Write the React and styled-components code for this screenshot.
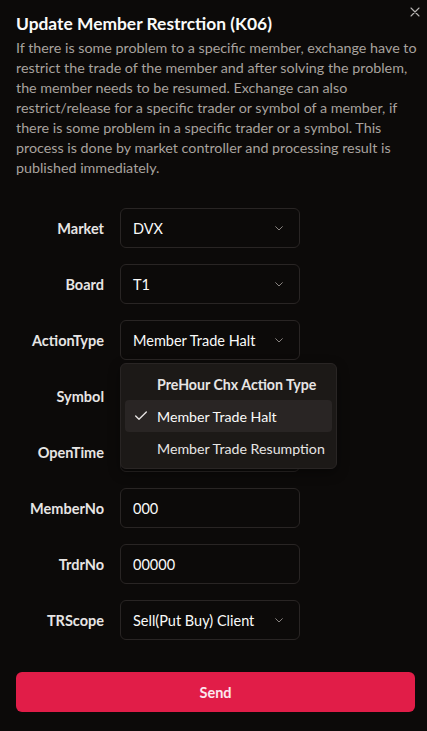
import React from "react";
import styled, { createGlobalStyle } from "styled-components";

const Global = createGlobalStyle`
  html, body { margin: 0; padding: 0; background: #0c0a09; }
  body { font-family: Lato, "Noto Sans", sans-serif; color: #fafaf9; }
  * { box-sizing: border-box; }
`;

const Dialog = styled.div`
  position: relative;
  width: 427px;
  height: 731px;
  background: #0c0a09;
  padding: 13px 4px 0 16px;
  display: flex;
  flex-direction: column;
`;

const Close = styled.button`
  position: absolute;
  top: 4px;
  right: 4px;
  width: 16px;
  height: 16px;
  padding: 0;
  border: 0;
  background: transparent;
  color: #d6d3d1;
  display: flex;
  align-items: center;
  justify-content: center;
  opacity: 0.85;
`;

const Title = styled.h2`
  margin: 0;
  font-size: 17.4px;
  line-height: 22px;
  font-weight: 700;
  color: #fafaf9;
`;

const Desc = styled.p`
  margin: 3px 0 0;
  font-size: 14.3px;
  line-height: 20px;
  color: #a8a29e;
`;

const Form = styled.div`
  position: relative;
  margin-top: 30px;
  display: grid;
  grid-template-columns: 88px 180px;
  column-gap: 16px;
  row-gap: 16px;
  align-items: center;
`;

const Label = styled.label`
  text-align: right;
  font-size: 14.5px;
  font-weight: 700;
  color: #e7e5e4;
`;

const Field = styled.div`
  height: 40px;
  border: 1px solid #292524;
  border-radius: 6px;
  background: #0c0a09;
  display: flex;
  align-items: center;
  justify-content: space-between;
  padding: 0 12px;
  font-size: 14.5px;
  color: #fafaf9;
`;

const Chevron = () => (
  <svg width="16" height="16" viewBox="0 0 24 24" fill="none" stroke="#a8a29e" strokeWidth="1.5" strokeLinecap="round" strokeLinejoin="round" style={{ opacity: 0.8 }}>
    <path d="m7 10 5 5 5-5" />
  </svg>
);

const Menu = styled.div`
  position: absolute;
  left: 104px;
  top: 155px;
  width: 217px;
  padding: 4px;
  background: #1c1917;
  border: 1px solid #292524;
  border-radius: 6px;
  box-shadow: 0 4px 12px rgba(0,0,0,0.4);
`;

const MenuLabel = styled.div`
  height: 32px;
  padding-left: 32px;
  display: flex;
  align-items: center;
  font-size: 14.2px;
  font-weight: 700;
  color: #e7e5e4;
  white-space: nowrap;
`;

const MenuItem = styled.div`
  position: relative;
  height: 32px;
  padding-left: 32px;
  display: flex;
  align-items: center;
  font-size: 14.2px;
  border-radius: 4px;
  white-space: nowrap;
  color: ${p => (p.$active ? "#fafaf9" : "#e7e5e4")};
  background: ${p => (p.$active ? "#292524" : "transparent")};
`;

const Check = styled.span`
  position: absolute;
  left: 8px;
  top: 8px;
  display: flex;
`;

const SendButton = styled.button`
  margin-top: 32px;
  height: 40px;
  width: 399px;
  border: 0;
  border-radius: 6px;
  background: #e11d48;
  color: #fce7ee;
  font-family: inherit;
  font-size: 14.5px;
  font-weight: 700;
`;

const rows = [
  { label: "Market", value: "DVX", select: true },
  { label: "Board", value: "T1", select: true },
  { label: "ActionType", value: "Member Trade Halt", select: true },
  { label: "Symbol", value: "", select: true },
  { label: "OpenTime", value: "", select: true },
  { label: "MemberNo", value: "000" },
  { label: "TrdrNo", value: "00000" },
  { label: "TRScope", value: "Sell(Put Buy) Client", select: true },
];

export default function App() {
  return (
    <>
      <Global />
      <Dialog>
        <Close aria-label="Close">
          <svg width="16" height="16" viewBox="0 0 24 24" fill="none" stroke="#d6d3d1" strokeWidth="1.6" strokeLinecap="round">
            <path d="M18 6 6 18M6 6l12 12" />
          </svg>
        </Close>
        <Title>Update Member Restrction (K06)</Title>
        <Desc>
          If there is some problem to a specific member, exchange have to restrict the trade of the member and after solving the problem, the member needs to be resumed. Exchange can also restrict/release for a specific trader or symbol of a member, if there is some problem in a specific trader or a symbol. This process is done by market controller and processing result is published immediately.
        </Desc>
        <Form>
          {rows.map(r => (
            <React.Fragment key={r.label}>
              <Label>{r.label}</Label>
              <Field>
                <span>{r.value}</span>
                {r.select && <Chevron />}
              </Field>
            </React.Fragment>
          ))}
          <Menu>
            <MenuLabel>PreHour Chx Action Type</MenuLabel>
            <MenuItem $active>
              <Check>
                <svg width="16" height="16" viewBox="0 0 24 24" fill="none" stroke="#e7e5e4" strokeWidth="2" strokeLinecap="round" strokeLinejoin="round">
                  <path d="M20 6 9 17l-5-5" />
                </svg>
              </Check>
              Member Trade Halt
            </MenuItem>
            <MenuItem>Member Trade Resumption</MenuItem>
          </Menu>
        </Form>
        <SendButton>Send</SendButton>
      </Dialog>
    </>
  );
}
